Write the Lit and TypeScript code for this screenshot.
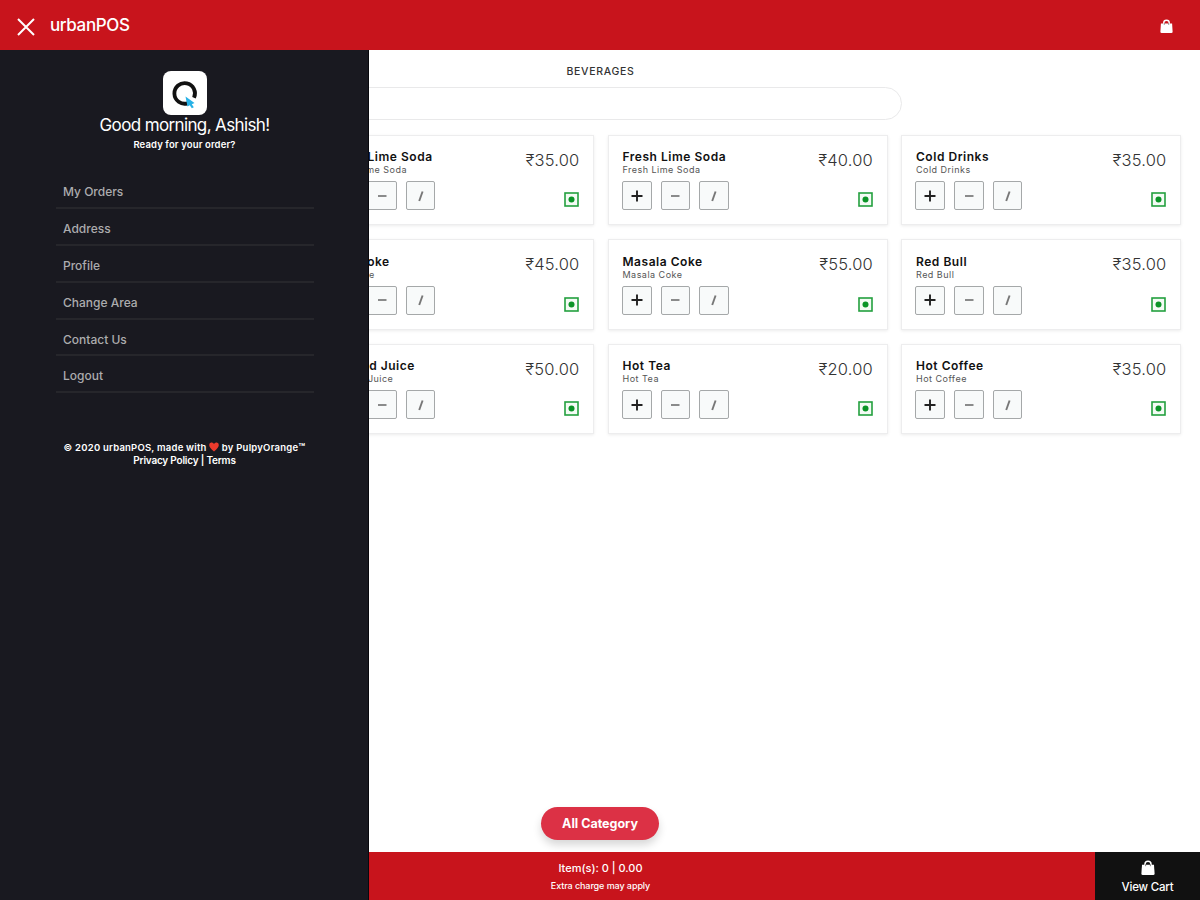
import { LitElement, html, css } from "lit";
import { customElement, property } from "lit/decorators.js";

interface Item {
  name: string;
  price: string;
}

const ITEMS: Item[] = [
  { name: "Fresh Lime Soda", price: "35.00" },
  { name: "Fresh Lime Soda", price: "40.00" },
  { name: "Cold Drinks", price: "35.00" },
  { name: "Diet Coke", price: "45.00" },
  { name: "Masala Coke", price: "55.00" },
  { name: "Red Bull", price: "35.00" },
  { name: "Canned Juice", price: "50.00" },
  { name: "Hot Tea", price: "20.00" },
  { name: "Hot Coffee", price: "35.00" },
];

const MENU = ["My Orders", "Address", "Profile", "Change Area", "Contact Us", "Logout"];

const bag = html`<svg class="bag" viewBox="0 0 14 16">
  <path d="M4 6V4.2a3 3 0 0 1 6 0V6" fill="none" stroke="#fff" stroke-width="1.5" />
  <path d="M1 4.7h12l.6 9a1.3 1.3 0 0 1-1.3 1.3H1.7a1.3 1.3 0 0 1-1.3-1.3z" fill="#fff" />
  <path d="M4.6 4.7v1.1M9.4 4.7v1.1" stroke="#777" stroke-width=".9" stroke-linecap="round" />
</svg>`;

@customElement("menu-card")
class MenuCard extends LitElement {
  @property({ attribute: false }) item!: Item;

  static styles = css`
    :host {
      display: flex;
      justify-content: space-between;
      box-sizing: border-box;
      height: 90.5px;
      padding: 13.5px 14px 0 14px;
      border: 1px solid #ededee;
      background: #fff;
      box-shadow: 0 1px 3px rgba(0, 0, 0, 0.08);
      color: #111;
    }
    .name {
      font-size: 12px;
      line-height: 15px;
      font-weight: 600;
      letter-spacing: 0.53px;
      white-space: nowrap;
    }
    .desc {
      font-size: 9px;
      line-height: 11px;
      color: #555;
      letter-spacing: 0.48px;
      white-space: nowrap;
    }
    .buttons {
      display: flex;
      gap: 9px;
      margin: 6px 0 0 -0.6px;
    }
    .btn {
      box-sizing: border-box;
      width: 29.7px;
      height: 29px;
      border: 1.5px solid #a5a8a9;
      border-radius: 2px;
      background: #f8fafa;
      display: grid;
      place-items: center;
    }
    .btn svg {
      width: 14px;
      height: 14px;
      display: block;
    }
    .right {
      display: flex;
      flex-direction: column;
      align-items: flex-end;
    }
    .price {
      font-size: 16.5px;
      line-height: 20px;
      font-weight: 300;
      color: #333;
      letter-spacing: 0.2px;
      margin: 0.5px -0.5px 0 0;
      white-space: nowrap;
    }
    .veg {
      width: 15px;
      height: 15px;
      margin-top: 22.5px;
    }
  `;

  render() {
    return html`
      <div>
        <div class="name">${this.item.name}</div>
        <div class="desc">${this.item.name}</div>
        <div class="buttons">
          <div class="btn">
            <svg viewBox="0 0 14 14"><path d="M1.5 7h11M7 1.5v11" stroke="#222" stroke-width="1.9" /></svg>
          </div>
          <div class="btn">
            <svg viewBox="0 0 14 14"><path d="M3 7h8.5" stroke="#666" stroke-width="1.5" /></svg>
          </div>
          <div class="btn">
            <svg viewBox="0 0 14 14"><path d="M5.2 12 8.6 2.5" stroke="#777" stroke-width="1.9" /></svg>
          </div>
        </div>
      </div>
      <div class="right">
        <div class="price">₹${this.item.price}</div>
        <svg class="veg" viewBox="0 0 15 15">
          <rect x="1" y="1" width="13" height="13" fill="#f4fbf5" stroke="#23a03f" stroke-width="1.6" />
          <circle cx="7.5" cy="7.5" r="3" fill="#0b9427" />
        </svg>
      </div>
    `;
  }
}

@customElement("app-root")
class AppRoot extends LitElement {
  static styles = css`
    :host {
      display: flex;
      flex-direction: column;
      position: relative;
      box-sizing: border-box;
      width: 1200px;
      height: 900px;
      overflow: hidden;
      background: #fff;
      font-family: Inter, "Liberation Sans", sans-serif;
    }
    .bag {
      display: block;
    }
    .header {
      flex: none;
      height: 49.5px;
      box-sizing: border-box;
      padding: 1px 27px 0 17px;
      display: flex;
      align-items: center;
      background: #c8141c;
      color: #fff;
    }
    .close {
      width: 18px;
      height: 18px;
      margin-top: 4px;
    }
    .brand {
      margin-left: 15px;
      font-size: 17px;
      line-height: 22px;
      font-weight: 500;
      letter-spacing: -0.38px;
      flex: 1;
    }
    .header .bag {
      width: 13px;
      height: 15px;
      margin-top: 2px;
    }
    .main {
      flex: 1;
      display: flex;
      flex-direction: column;
      align-items: center;
    }
    .category {
      margin: 14px 0 0 1px;
      font-size: 10.5px;
      line-height: 15px;
      font-weight: 500;
      color: #333;
      letter-spacing: 0.7px;
    }
    .search {
      box-sizing: border-box;
      width: 604px;
      height: 33px;
      margin-top: 8px;
      border: 1px solid #e9e9ea;
      border-radius: 17px;
    }
    .grid {
      align-self: flex-end;
      display: grid;
      grid-template-columns: repeat(3, 280px);
      gap: 14px 13.5px;
      margin: 15px 19px 0 0;
    }
    .all {
      margin-top: auto;
      margin-bottom: 12.5px;
      width: 118px;
      height: 33px;
      border-radius: 17px;
      background: #dc3145;
      color: #fff;
      font-size: 12.5px;
      line-height: 33px;
      font-weight: 700;
      text-align: center;
      box-shadow: 0 5px 9px rgba(0, 0, 0, 0.16);
    }
    .footer {
      flex: none;
      height: 48px;
      display: flex;
      background: #c8141c;
      color: #fff;
      text-align: center;
    }
    .total {
      flex: 1;
      padding: 9px 0 0 106px;
    }
    .count {
      font-size: 11px;
      line-height: 14px;
      font-weight: 500;
    }
    .extra {
      margin-top: 5px;
      font-size: 9px;
      line-height: 11px;
      font-weight: 500;
      letter-spacing: -0.08px;
    }
    .cart {
      width: 105px;
      background: #111;
      display: flex;
      flex-direction: column;
      align-items: center;
      font-size: 11.5px;
      line-height: 14px;
      font-weight: 500;
      letter-spacing: -0.2px;
    }
    .cart .bag {
      width: 14px;
      height: 16px;
      margin: 8px 0 4px;
    }
    .drawer {
      position: absolute;
      left: 0;
      top: 49.5px;
      bottom: 0;
      width: 369px;
      box-sizing: border-box;
      border-right: 1.5px solid #08080d;
      background: #191920;
      display: flex;
      flex-direction: column;
      align-items: center;
      color: #fff;
    }
    .logo {
      width: 44px;
      height: 44px;
      margin: 21px 0 0 1px;
    }
    .hello {
      font-size: 17px;
      line-height: 20px;
      margin: 0 0 0 1px;
      letter-spacing: -0.63px;
    }
    .ready {
      font-size: 9.5px;
      line-height: 12px;
      margin: 4px 0 0 1px;
      font-weight: 600;
      letter-spacing: 0.12px;
    }
    .menu {
      width: 258px;
      margin: 21.5px 0 0 1px;
    }
    .entry {
      box-sizing: border-box;
      height: 36.9px;
      padding: 11px 0 0 7.5px;
      font-size: 12px;
      line-height: 18px;
      font-weight: 500;
      color: #acacae;
      border-bottom: 2px solid #26262b;
    }
    .legal {
      margin: 47.5px 0 0 1px;
      text-align: center;
      font-weight: 600;
      line-height: 13.5px;
    }
    .copy {
      font-size: 9.5px;
      letter-spacing: 0.22px;
      white-space: nowrap;
    }
    .links {
      font-size: 10px;
      letter-spacing: -0.2px;
    }
    .tm {
      font-size: 11px;
      line-height: 1;
    }
    .heart {
      width: 10px;
      height: 10px;
      vertical-align: -1px;
    }
  `;

  render() {
    return html`
      <div class="header">
        <svg class="close" viewBox="0 0 18 18">
          <path d="M1 1 17 17M17 1 1 17" stroke="#fff" stroke-width="2" />
        </svg>
        <div class="brand">urbanPOS</div>
        ${bag}
      </div>
      <div class="main">
        <div class="category">BEVERAGES</div>
        <div class="search"></div>
        <div class="grid">${ITEMS.map((i) => html`<menu-card .item=${i}></menu-card>`)}</div>
        <div class="all">All Category</div>
      </div>
      <div class="footer">
        <div class="total">
          <div class="count">Item(s): 0 | 0.00</div>
          <div class="extra">Extra charge may apply</div>
        </div>
        <div class="cart">${bag}<span>View Cart</span></div>
      </div>
      <div class="drawer">
        <svg class="logo" viewBox="0 0 44 44">
          <rect width="44" height="44" rx="8" fill="#fff" />
          <path d="M24.5 32.3A10.3 10.3 0 1 1 31 26.8" fill="none" stroke="#111" stroke-width="3.8" />
          <path d="M22.5 25.5 31.5 32 28.8 33.2 30.8 36.3 28.8 37.3 26.8 34.2 24.5 35.5z" fill="#27b1e6" />
        </svg>
        <div class="hello">Good morning, Ashish!</div>
        <div class="ready">Ready for your order?</div>
        <div class="menu">${MENU.map((m) => html`<div class="entry">${m}</div>`)}</div>
        <div class="legal">
          <div class="copy">
            © 2020 urbanPOS, made with
            <svg class="heart" viewBox="0 0 10 10">
              <path d="M5 9.6C2 7 .2 5 .2 3A2.5 2.5 0 0 1 5 2 2.5 2.5 0 0 1 9.8 3C9.8 5 8 7 5 9.6z" fill="#ec3a2c" />
            </svg>
            by PulpyOrange<span class="tm">™</span>
          </div>
          <div class="links">Privacy Policy | Terms</div>
        </div>
      </div>
    `;
  }
}
